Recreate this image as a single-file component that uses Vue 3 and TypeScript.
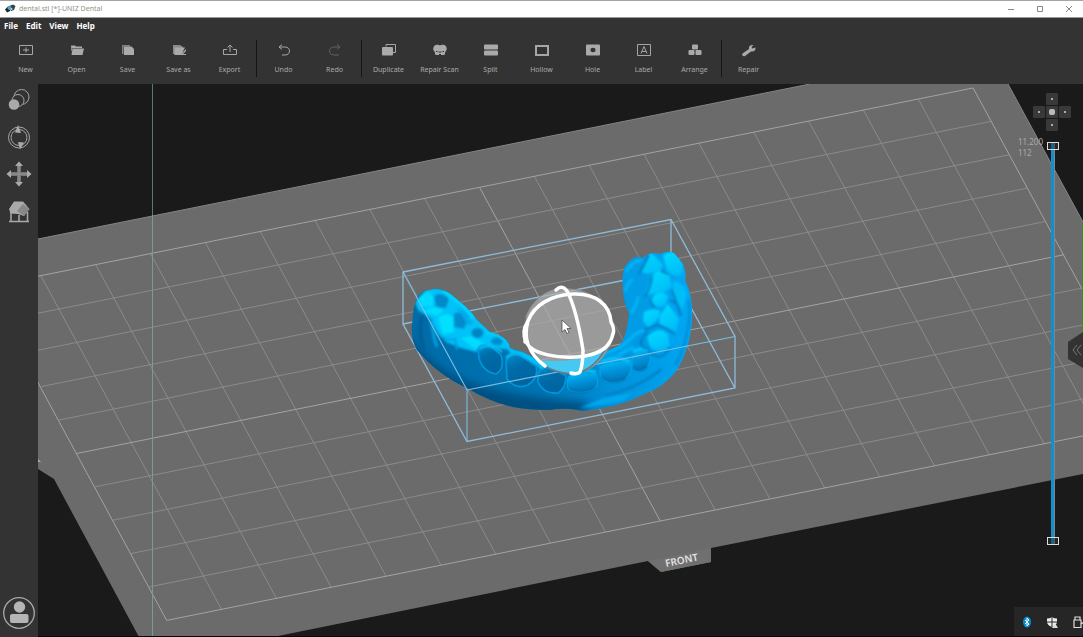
<script setup lang="ts">
import { ref } from 'vue'

interface Tool { id: string; label: string; dim?: boolean }
interface GridLine { x1: number; y1: number; x2: number; y2: number; major: boolean }

const menus: string[] = ['File', 'Edit', 'View', 'Help']

const groups: Tool[][] = [
  [
    { id: 'new', label: 'New' },
    { id: 'open', label: 'Open' },
    { id: 'save', label: 'Save' },
    { id: 'saveas', label: 'Save as' },
    { id: 'export', label: 'Export' },
  ],
  [
    { id: 'undo', label: 'Undo' },
    { id: 'redo', label: 'Redo', dim: true },
  ],
  [
    { id: 'duplicate', label: 'Duplicate' },
    { id: 'scan', label: 'Repair Scan' },
    { id: 'split', label: 'Split' },
    { id: 'hollow', label: 'Hollow' },
    { id: 'hole', label: 'Hole' },
    { id: 'label', label: 'Label' },
    { id: 'arrange', label: 'Arrange' },
  ],
  [{ id: 'repair', label: 'Repair' }],
]

const columns = 18
const rows = 10

// Projects a build-plate grid node to scene coordinates.
function project(u: number, v: number): [number, number] {
  return [-14 + 54.84 * u + 18.07 * v, 286.7 - 11.04 * u + 33.37 * v]
}

function line(u1: number, v1: number, u2: number, v2: number, major: boolean): GridLine {
  const [x1, y1] = project(u1, v1)
  const [x2, y2] = project(u2, v2)
  return { x1, y1, x2, y2, major }
}

const grid: GridLine[] = []
for (let u = 0; u <= columns; u++) grid.push(line(u, 0, u, rows, u % 9 === 0))
for (let v = 0; v <= rows; v++) grid.push(line(0, v, columns, v, v % 5 === 0))

const topLayer = ref(112)
const bottomLayer = ref(0)
const pad = ['', 'Up', '', 'Left', 'Home', 'Right', '', 'Down', '']
</script>

<template>
  <div class="app">
    <header class="titlebar">
      <svg class="logo" viewBox="0 0 12 10" aria-hidden="true">
        <path d="M1 5.500L4 2.500l3 .5-1 4-3 1.500z" fill="#222" />
        <path d="M5 2l4-1.500L11.500 2 10 6 7 7z" fill="#35454d" />
        <circle cx="5.500" cy="4" r="2" fill="#4ba6cf" />
        <circle cx="7.500" cy="5" r="1" fill="#b7dbe8" />
      </svg>
      <span class="title">dental.stl [*]-UNIZ Dental</span>
      <div class="window-buttons">
        <button type="button" aria-label="Minimize"><svg viewBox="0 0 8 8"><path d="M1 4.500h6" /></svg></button>
        <button type="button" aria-label="Maximize"><svg viewBox="0 0 8 8"><path d="M1.500 1.500h5v5h-5z" /></svg></button>
        <button type="button" aria-label="Close"><svg viewBox="0 0 8 8"><path d="M1 1l6 6M7 1L1 7" /></svg></button>
      </div>
    </header>

    <nav class="menubar">
      <button v-for="m in menus" :key="m" type="button">{{ m }}</button>
    </nav>

    <div class="toolbar">
      <div v-for="(group, gi) in groups" :key="gi" class="group">
        <button v-for="t in group" :key="t.id" type="button" class="tool" :class="{ dim: t.dim }">
          <svg viewBox="0 0 16 14" aria-hidden="true">
            <g v-if="t.id === 'new'" class="stroke"><path d="M1.500 2.500h13v9h-13zM8 4.500v5M5 7h6" /></g>
            <g v-else-if="t.id === 'open'" class="fill">
              <path d="M2 2.500h4l1 1h6V5H3.500L2.500 9z" />
              <path d="M3.500 5.500H15L13.500 12H2.500z" />
            </g>
            <g v-else-if="t.id === 'save'" class="fill">
              <path d="M2 2h8v1.500H3.500V11H2z" opacity=".65" />
              <path d="M4 3.500h7.500L14 6v6H4z" />
            </g>
            <g v-else-if="t.id === 'saveas'" class="fill">
              <path d="M2 2h7l3 2v1H4v6H2z" opacity=".75" />
              <path d="M3.500 4.500H14L10 12H3.500z" />
              <path d="M10 11l5-5v2l-3 3h3v1h-6z" />
            </g>
            <g v-else-if="t.id === 'export'" class="stroke">
              <path d="M5 6.500H1.500v5h13v-5H11M8 9V2.500M5.500 4.500L8 2l2.500 2.500" />
            </g>
            <g v-else-if="t.id === 'undo'" class="stroke">
              <path d="M6 1.500L3 4l3 2.500M3.500 4H9c6 0 6 8 0 8H6" />
            </g>
            <g v-else-if="t.id === 'redo'" class="stroke">
              <path d="M10 1.500L13 4l-3 2.500M12.500 4H7c-6 0-6 8 0 8h5" />
            </g>
            <g v-else-if="t.id === 'duplicate'">
              <path class="stroke" d="M5 3.500V1.500h9.500v8H12" />
              <rect class="fill" x="1" y="4" width="11" height="8.500" rx="1" />
            </g>
            <g v-else-if="t.id === 'scan'" class="fill">
              <path d="M4 2c2-.8 3 .2 4 .2S10 1.200 12 2c3 .5 3.500 5 1.500 6.500L12.500 12h-9L2.500 8.500C.5 7 1 2.500 4 2z" />
              <path d="M4 8.500h1.500M6.500 9h3M10.500 8.500H12M7 11.500h2" stroke="#333" stroke-width="1" />
            </g>
            <g v-else-if="t.id === 'split'" class="fill">
              <rect x="1" y="1.500" width="14" height="5" rx="1" />
              <rect x="1" y="7.500" width="14" height="5" rx="1" />
            </g>
            <g v-else-if="t.id === 'hollow'">
              <rect class="stroke heavy" x="2" y="3" width="12" height="9" />
            </g>
            <g v-else-if="t.id === 'hole'">
              <rect class="fill" x="1" y="1.500" width="14" height="11" rx="1" />
              <ellipse cx="8" cy="7" rx="2.600" ry="2.200" fill="#333" />
            </g>
            <g v-else-if="t.id === 'label'" class="stroke">
              <path d="M1.500 1.500h13v11h-13zM5 10.500L8 3.500l3 7M6 8.500h4" />
            </g>
            <g v-else-if="t.id === 'arrange'" class="fill">
              <rect x="5" y="1.500" width="6" height="5" rx="1" />
              <rect x="1.500" y="7" width="6" height="5" rx="1" />
              <rect x="8.500" y="7" width="6" height="5" rx="1" />
            </g>
            <g v-else class="fill">
              <path d="M1.500 10.500L8 6c-.5-3 1.500-4.500 4.500-4L10.500 4l1 1.500 3-1c.3 3-1.500 4.500-4.500 4l-6 4.500c-2 1-3.500-1-2.500-2.500z" />
            </g>
          </svg>
          <span>{{ t.label }}</span>
        </button>
      </div>
    </div>

    <main class="workspace">
      <aside class="sidebar">
        <button type="button" aria-label="Scale">
          <svg viewBox="0 0 26 26">
            <g class="stroke"><circle cx="15.500" cy="10" r="7.500" /><circle cx="12" cy="13.500" r="6" fill="#333" /></g>
            <circle class="fill" cx="8" cy="17.500" r="5.300" />
          </svg>
        </button>
        <button type="button" aria-label="Rotate">
          <svg viewBox="0 0 26 26">
            <g class="stroke"><circle cx="13" cy="13.500" r="10.500" /><circle cx="13" cy="13.500" r="8" /></g>
            <path class="fill" d="M12 1l3 8-6-.5zM14 25.500l-2-7.500 6 .5z" />
          </svg>
        </button>
        <button type="button" aria-label="Move">
          <svg viewBox="0 0 26 26">
            <path d="M13 4v18M4 13h18" stroke="#777" stroke-width="4" />
            <path d="M13 4v18M4 13h18" stroke="#999" stroke-width="1" />
            <path class="fill" d="M13 .5L17 5H9zM13 25.500L9 21h8zM.5 13L5 9v8zM25.500 13L21 17V9z" />
          </svg>
        </button>
        <button type="button" aria-label="Support">
          <svg viewBox="0 0 26 26">
            <path d="M3 23.500h20M5 23V13M21.500 23V14M13 23v-6" stroke="#aaa" stroke-width="1.500" />
            <path class="fill" d="M3 11L8 3.500h9l6.500 7.500-5.500 7-6-2-7.500-.5z" />
            <path d="M11 13l6-7 6.500 5-5.500 7z" fill="#888" />
          </svg>
        </button>
        <button type="button" class="account" aria-label="Account">
          <svg viewBox="0 0 34 34">
            <circle cx="17" cy="17" r="15.300" fill="none" stroke="#aaa" stroke-width="1.300" />
            <circle cx="17.500" cy="11" r="5.700" fill="#b5b5b5" />
            <rect x="8" y="18" width="18.500" height="9" rx="2" fill="#b5b5b5" />
          </svg>
        </button>
      </aside>

      <section class="scene">
        <svg class="canvas" viewBox="38 84 1045 553" preserveAspectRatio="xMinYMin slice" role="img" aria-label="Dental model on build plate">
          <defs>
            <linearGradient id="body" gradientUnits="userSpaceOnUse" x1="412" y1="330" x2="692" y2="310">
              <stop offset="0" stop-color="#006ca8" />
              <stop offset=".45" stop-color="#0074b3" />
              <stop offset=".7" stop-color="#0092da" />
              <stop offset="1" stop-color="#00a8f5" />
            </linearGradient>
            <linearGradient id="tooth" x1="0" y1="0" x2=".5" y2="1">
              <stop offset="0" stop-color="#008fd0" />
              <stop offset=".45" stop-color="#006ca8" />
              <stop offset="1" stop-color="#00649f" />
            </linearGradient>
            <linearGradient id="toothRight" x1="0" y1="0" x2=".3" y2="1">
              <stop offset="0" stop-color="#00bdf8" />
              <stop offset=".5" stop-color="#0093da" />
              <stop offset="1" stop-color="#0076b6" />
            </linearGradient>
            <linearGradient id="cusp" x1="0" y1="0" x2=".5" y2="1">
              <stop offset="0" stop-color="#00ddff" />
              <stop offset="1" stop-color="#00bdf8" />
            </linearGradient>
            <filter id="soft" x="-20%" y="-20%" width="140%" height="140%"><feGaussianBlur stdDeviation=".8" /></filter>
            <filter id="softer" x="-20%" y="-20%" width="140%" height="140%"><feGaussianBlur stdDeviation="4" /></filter>
            <clipPath id="jaw">
              <path d="M430 290Q436 288 440 289Q447 291 452 295L465 306Q472 312 477 320L490 332Q499 334 505 339Q509 342 510 348L523 352L540 361Q570 364 590 359L603 352Q615 349 622 343Q628 330 629 313Q623 301 623 290Q621 268 628 263Q634 255 643 258Q650 251 660 254Q668 250 674 253L683 264Q687 276 685 280Q693 297 692 315Q692 344 677 370Q665 386 647 393Q618 408 583 411Q566 407 550 410Q528 410 513 407Q490 402 467 388Q438 375 417 350Q411 340 412 325Q413 305 418 296Q423 290 430 290Z" />
            </clipPath>
          </defs>

          <rect x="38" y="84" width="1045" height="553" fill="#1a1a1a" />
          <path d="M38 239L810 84H1008L1083 222V474L711 548V562L661 572L648 561L273 637H139L54 479L38 469Z" fill="#6b6b6b" />
          <path d="M38 239L810 84M1008 84L1083 222" stroke="#858585" fill="none" />
          <path d="M648 561L711 548V562L661 572Z" fill="#707070" />
          <path d="M38 459l3 3h-3z" fill="#aaa" />

          <line v-for="(g, i) in grid" :key="i" :x1="g.x1" :y1="g.y1" :x2="g.x2" :y2="g.y2" :stroke="g.major ? '#a3a3a3' : '#8b8b8b'" />
          <text class="front" transform="translate(666 567) rotate(-11.400)">FRONT</text>
          <path d="M152.500 84V637" stroke="#7c9899" />
          <path d="M152.500 84V215" stroke="#5d7878" />

          <g stroke="#8fbbd8" fill="none" stroke-width="1.300">
            <path d="M403 272L671 219.500L735 336.500V388L467 441.500L403 324ZM671 219.500V271L735 388M403 324L671 271" />
          </g>

          <g clip-path="url(#jaw)">
            <rect x="405" y="245" width="295" height="170" fill="url(#body)" />
            <path d="M405 330Q425 365 470 382Q510 398 590 402L580 415H480L405 370Z" fill="#004f82" filter="url(#softer)" />
            <path d="M620 262Q640 252 654 256L646 282L650 315L632 345L606 372L585 358L620 342L629 315Z" fill="#009ce6" filter="url(#soft)" />

            <g filter="url(#soft)">
              <path d="M415 302L428 287L452 291L480 318L506 336L514 350L496 348L484 346L476 352L461 348L446 342L436 330L430 318L418 310Z" fill="#00c2f8" />
              <path d="M506 348L523 351L543 360V370L530 362L512 355Z" fill="#00bcf4" />
              <path d="M434 296Q443 291 449 299L446 308L436 307Z" fill="#0088c8" />
              <path d="M454 313Q463 311 469 318L464 329L454 327Z" fill="#008ccd" />
              <ellipse cx="477.500" cy="333" rx="6" ry="5" fill="#0084c4" />
              <ellipse cx="497" cy="341.500" rx="6" ry="4" fill="#008bcd" />
              <path d="M419 297L428 292L434 297L432 307L421 306Z" fill="#00dcff" />
              <path d="M438 318Q446 311 453 317L454 332L443 334Z" fill="#00e0ff" />
              <path d="M422 311L436 307L444 310L437 316Z" fill="#00dcff" />
              <path d="M461 338L470 336L484 343L475 349Z" fill="#00dcff" />
              <path d="M443 291L456 301L466 308L473 319" stroke="#00d6ff" stroke-width="3" fill="none" />
              <path d="M485 333L497 334L505 341" stroke="#00d6ff" stroke-width="2" fill="none" />
              <path d="M456 307L466 312L474 323L469 326Z" fill="#00aceb" />
              <path d="M431 318Q433 336 437 347" stroke="#00a0e0" stroke-width="3" fill="none" />
              <path d="M436 332Q444 342 455 339L457 350" stroke="#009cdc" stroke-width="2" fill="none" />
              <path d="M422 315Q418 334 424 350" stroke="#005f98" stroke-width="4" fill="none" />
            </g>

            <g stroke="#0097da" stroke-width="1.600">
              <path d="M478 350Q480 342 491 347L501 355Q505 369 496 374Q483 372 479 358Z" fill="url(#tooth)" />
              <path d="M506 362Q508 352 518 354L536 366Q539 378 528 385Q516 390 507 379Z" fill="url(#tooth)" />
              <path d="M538 374Q540 366 552 368L566 376Q566 388 558 393Q543 394 538 382Z" fill="url(#tooth)" />
            </g>
            <g stroke="#00a8ec" stroke-width="1">
              <path d="M567 380Q569 372 581 374L596 374Q601 386 592 390Q578 395 568 389Z" fill="url(#toothRight)" />
              <path d="M600 367Q612 359 630 364Q634 372 624 380Q606 387 600 375Z" fill="url(#toothRight)" />
              <path d="M632 358Q636 349 649 351Q653 359 646 368Q636 375 632 367Z" fill="url(#toothRight)" />
            </g>
            <g filter="url(#soft)">
              <path d="M479 349Q488 341 502 352M506 358Q515 348 536 362M540 368Q550 362 566 371" stroke="#00c5f8" stroke-width="2.500" fill="none" />
              <path d="M570 375Q582 369 596 372" stroke="#00c9fb" stroke-width="3" fill="none" />
              <path d="M601 362Q615 355 630 362M633 352Q640 347 650 350" stroke="#00c8ff" stroke-width="3" fill="none" />
              <path d="M602 377Q613 386 626 378M569 388Q581 396 594 388M633 367Q640 374 647 366" stroke="#0070ae" stroke-width="2" fill="none" />

              <path d="M647 337Q658 325 668 334L670 347Q660 355 650 347Z" fill="url(#cusp)" />
              <path d="M648 350Q660 365 670 347" stroke="#0083c8" stroke-width="2.500" fill="none" />
              <path d="M668 304L679 319L676 332L660 324L659 317Z" fill="url(#cusp)" />
              <path d="M644 312Q652 307 661 311L657 320L649 328L643 321Z" fill="url(#cusp)" />
              <path d="M653 297Q660 289 668 296L666 305Q658 310 652 302Z" fill="url(#cusp)" />
              <path d="M649 284L656 270L668 272L672 287L663 293L645 295Z" fill="url(#cusp)" />
              <path d="M641 272L650 252L663 264L661 271L648 274Z" fill="url(#cusp)" />
              <path d="M663 256Q673 247 682 260L683 273Q676 280 667 270Z" fill="url(#cusp)" />
              <path d="M673 281Q682 282 687 293L683 309L674 298Z" fill="#00bdf8" />
              <path d="M626 272Q632 261 642 260M625 292Q627 283 633 279M631 313Q637 306 638 296" stroke="#00b5f5" stroke-width="3" fill="none" />
              <path d="M639 274Q645 264 649 255M645 297Q651 287 652 277M654 308L650 300M643 330L657 325M647 332L641 341M657 325Q663 326 675 334M672 290L681 316M661 271L668 274M670 300L677 304" stroke="#007dc0" stroke-width="2" fill="none" />
              <path d="M641 340Q640 350 650 348" stroke="#0079bb" stroke-width="2" fill="none" />
              <path d="M604 354L622 346L637 333L644 330M618 355L634 347" stroke="#00b6f8" stroke-width="3" fill="none" />
              <path d="M604 396Q638 388 662 369" stroke="#0084ca" stroke-width="3" fill="none" />
              <path d="M580 408L604 398L632 393L624 401Z" fill="#00a8ef" />
            </g>
            <path d="M689 300Q692 335 675 366" stroke="#0090da" stroke-width="3" fill="none" filter="url(#soft)" />
          </g>

          <path d="M403 272L467 390V441.500M467 390L735 336.500" stroke="#78bfdf" fill="none" stroke-width="1.100" />

          <path d="M526 316C536 293 555 286 570 289C594 290 611 307 614 329C612 350 597 372 573 374C545 372 524 351 526 316Z" fill="#aeaeae" fill-opacity=".7" stroke="#888" stroke-width="1" />
          <path d="M538 360Q573 364 603 352Q592 371 574 373Q555 373 543 365Z" fill="#45c9f3" />
          <path d="M543 365Q557 374 574 374Q592 371 605 350" stroke="#627d87" fill="none" stroke-width="1.500" />
          <path d="M528 321C534 305 551 295 573 294C596 293 610 305 611 322Q615 329 613 334C610 347 601 353 585 356C560 360 530 354 526 341Q521 332 528 321C523 338 529 354 545 366" fill="none" stroke="#fff" stroke-width="3.500" stroke-linecap="round" stroke-linejoin="round" />
          <path d="M525 328V342" stroke="#fff" stroke-width="3.500" stroke-linecap="round" />
          <path d="M556 290Q562 284 567 291C575 306 580 331 583 350Q583 364 580 372Q577 375 571 373" fill="none" stroke="#fff" stroke-width="3.500" stroke-linecap="round" />
          <path d="M562 320V332L565 329.500L567 333.500L569 332.500L567 328.500H571Z" fill="#fff" stroke="#444" stroke-width=".7" />
          <path d="M1082.500 222V335" stroke="#259a14" />
          <path d="M38 636.500H1083" stroke="#050505" />
        </svg>

        <div class="nav-pad">
          <template v-for="(p, i) in pad" :key="i">
            <button v-if="p" type="button" :aria-label="p" :class="{ home: p === 'Home' }"></button>
            <span v-else></span>
          </template>
        </div>

        <div class="layers">
          <output class="readout">11.200<br />112</output>
          <div class="slider">
            <input v-model.number="topLayer" type="range" min="0" max="112" aria-label="Top layer" />
            <input v-model.number="bottomLayer" type="range" min="0" max="112" aria-label="Bottom layer" />
          </div>
        </div>

        <button type="button" class="drawer" aria-label="Open panel">
          <svg viewBox="0 0 15 36">
            <path d="M0 10L15 0V36L0 27Z" fill="#333" />
            <path d="M9 13l-4 5 4 5M13 13l-4 5 4 5" fill="none" stroke="#777" />
          </svg>
        </button>

        <div class="tray">
          <svg viewBox="0 0 14 14"><ellipse cx="7" cy="7" rx="4" ry="5.500" fill="#078bd0" /><path d="M5 5l4 4-2 2V3l2 2-4 4" fill="none" stroke="#fff" /></svg>
          <svg viewBox="0 0 14 14"><path d="M2 3.500Q5 3.500 7 2q2 1.500 5 1.500v3Q12 10 7 12 2 10 2 6.500z" fill="#eee" /><path d="M7 2v10M2 7h10" stroke="#262626" /><path d="M10 8l3 5H7z" fill="#ddd" /></svg>
          <svg viewBox="0 0 14 14"><path d="M5 5V2h5v3M4 5h7v7.500H4zM11 9l3-2" fill="none" stroke="#ddd" stroke-width="1.200" /></svg>
        </div>
      </section>
    </main>
  </div>
</template>

<style>
html,
body {
  background: #1a1a1a;
}
</style>

<style scoped>
.app {
  display: flex;
  flex-direction: column;
  height: 100vh;
  overflow: hidden;
  background: #333;
  font-family: 'Noto Sans', 'Open Sans', sans-serif;
}
button {
  padding: 0;
  border: 0;
  background: none;
  color: inherit;
  font: inherit;
}
svg {
  display: block;
}
.stroke {
  fill: none;
  stroke: #a6a6a6;
  stroke-width: 1;
}
.heavy {
  stroke-width: 2;
}
.fill {
  fill: #aaa;
}
.titlebar {
  display: flex;
  align-items: center;
  flex: none;
  height: 16px;
  padding-left: 4px;
  border-top: 1px solid #a5a5a5;
  border-bottom: 1px solid #999;
  background: #fff;
}
.logo {
  width: 12px;
  height: 10px;
}
.title {
  margin-left: 3px;
  color: #929287;
  font-size: 7px;
  line-height: 12px;
}
.window-buttons {
  display: flex;
  margin-left: auto;
}
.window-buttons button {
  display: grid;
  place-items: center;
  width: 29px;
  height: 14px;
}
.window-buttons svg {
  width: 8px;
  height: 8px;
  fill: none;
  stroke: #888;
}
.menubar {
  display: flex;
  flex: none;
  gap: 8px;
  height: 15px;
  padding-left: 4px;
  color: #fff;
  font-size: 8px;
  font-weight: 700;
  line-height: 14px;
}
.toolbar {
  display: flex;
  flex: none;
  height: 51px;
  color: #aaa;
}
.group {
  display: flex;
}
.group + .group::before {
  width: 1px;
  height: 37px;
  margin: 7px 1px 0;
  background: #151515;
  content: '';
}
.tool {
  display: flex;
  flex-direction: column;
  align-items: center;
  width: 51px;
  padding-top: 10px;
  font-size: 7px;
  line-height: 10px;
  white-space: nowrap;
}
.tool svg {
  width: 16px;
  height: 14px;
  margin-bottom: 8px;
}
.dim svg {
  opacity: 0.4;
}
.workspace {
  display: flex;
  flex: 1;
  min-height: 0;
}
.sidebar {
  display: flex;
  flex: none;
  flex-direction: column;
  align-items: center;
  gap: 11px;
  width: 38px;
  padding: 3px 0 7px;
  box-sizing: border-box;
  background: #333;
}
.sidebar svg {
  width: 26px;
  height: 26px;
}
.sidebar .account {
  margin-top: auto;
}
.sidebar .account svg {
  width: 34px;
  height: 34px;
}
.scene {
  position: relative;
  flex: 1;
  min-width: 0;
  overflow: hidden;
}
.canvas {
  width: 100%;
  height: 100%;
}
.front {
  fill: #e2e2e2;
  font-size: 10px;
  font-weight: 600;
}
.nav-pad {
  position: absolute;
  top: 9px;
  right: 12px;
  display: grid;
  grid-template-columns: repeat(3, 12px);
  grid-auto-rows: 12px;
  gap: 1px;
}
.nav-pad button {
  display: grid;
  place-items: center;
  border-radius: 1px;
  background: #393939;
}
.nav-pad button::after {
  width: 2px;
  height: 2px;
  background: #aaa;
  content: '';
}
.nav-pad .home::after {
  width: 6px;
  height: 6px;
  border-radius: 2px;
  background: #bbb;
}
.layers {
  position: absolute;
  top: 52px;
  right: 24px;
  bottom: 92px;
  display: flex;
}
.readout {
  margin-right: 4px;
  color: #aaa;
  font-size: 8px;
  line-height: 11px;
}
.slider {
  position: relative;
  width: 12px;
  margin-top: 6px;
  background: linear-gradient(90deg, transparent 4px, #168fc9 4px 7px, #718995 7px 8px, transparent 8px);
}
.slider input {
  position: absolute;
  inset: 0;
  width: 12px;
  height: 100%;
  margin: 0;
  appearance: none;
  background: none;
  direction: rtl;
  pointer-events: none;
  writing-mode: vertical-lr;
}
.slider input::-webkit-slider-thumb {
  width: 12px;
  height: 8px;
  border: 1px solid #ddd;
  border-radius: 0;
  box-sizing: border-box;
  appearance: none;
  background: rgb(40 50 55 / 50%);
  pointer-events: auto;
}
.drawer {
  position: absolute;
  top: 248px;
  right: 0;
}
.drawer svg {
  width: 15px;
  height: 36px;
}
.tray {
  position: absolute;
  right: 0;
  bottom: 1px;
  display: flex;
  align-items: center;
  gap: 11px;
  width: 63px;
  height: 29px;
  padding-left: 6px;
  overflow: hidden;
  background: #262626;
}
.tray svg {
  flex: none;
  width: 14px;
  height: 14px;
}
</style>
